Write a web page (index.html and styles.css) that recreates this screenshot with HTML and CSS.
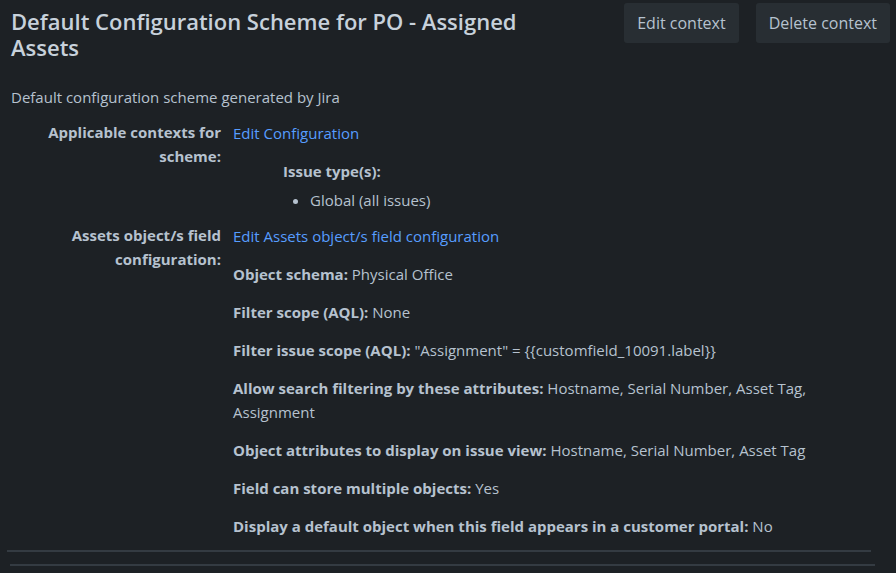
FILE: index.html
```html
<!DOCTYPE html>
<html lang="en">
<head>
  <meta charset="UTF-8">
  <title>Default Configuration Scheme for PO - Assigned Assets</title>
  <link rel="stylesheet" href="styles.css">
</head>
<body>

  <div class="page-header">
    <h1 class="title">Default Configuration Scheme for PO - Assigned Assets</h1>
    <div class="actions">
      <button>Edit context</button>
      <button>Delete context</button>
    </div>
  </div>

  <p class="description">Default configuration scheme generated by Jira</p>

  <div class="field-group">
    <div class="label">Applicable contexts for scheme:</div>
    <div class="value">
      <a href="#">Edit Configuration</a>
      <div class="issue-types">
        <strong>Issue type(s):</strong>
        <ul>
          <li>Global (all issues)</li>
        </ul>
      </div>
    </div>
  </div>

  <div class="field-group">
    <div class="label">Assets object/s field configuration:</div>
    <div class="value">
      <a href="#">Edit Assets object/s field configuration</a>
      <div class="item"><strong>Object schema:</strong> Physical Office</div>
      <div class="item"><strong>Filter scope (AQL):</strong> None</div>
      <div class="item"><strong>Filter issue scope (AQL):</strong> "Assignment" = {{customfield_10091.label}}</div>
      <div class="item"><strong>Allow search filtering by these attributes:</strong> Hostname, Serial Number, Asset Tag, Assignment</div>
      <div class="item"><strong>Object attributes to display on issue view:</strong> Hostname, Serial Number, Asset Tag</div>
      <div class="item"><strong>Field can store multiple objects:</strong> Yes</div>
      <div class="item"><strong>Display a default object when this field appears in a customer portal:</strong> No</div>
    </div>
  </div>

  <hr class="rule">
  <hr class="rule second">

</body>
</html>
```

FILE: styles.css
```css
html, body {
  margin: 0;
  padding: 0;
  background: #1d2125;
  color: #b6c2cf;
  font-family: "Open Sans", "Noto Sans", sans-serif;
  font-size: 15px;
  line-height: 24px;
}

body {
  padding: 0 11px;
}

.page-header {
  display: flex;
  justify-content: space-between;
  align-items: flex-start;
  padding-top: 3px;
}

.title {
  margin: 5px 0 0;
  width: 530px;
  font-size: 22px;
  line-height: 26px;
  font-weight: 600;
  color: #c7d1db;
}

.actions {
  display: flex;
  gap: 17px;
  margin-right: -5px;
}

button {
  height: 40px;
  padding: 0 13px;
  font-family: inherit;
  font-size: 16px;
  color: #b6c2cf;
  background: #282e33;
  border: none;
  border-radius: 3px;
}

.description {
  margin: 25px 0 12px;
}

.field-group {
  display: flex;
  gap: 12px;
  margin-bottom: 12px;
}

.label {
  width: 210px;
  flex-shrink: 0;
  text-align: right;
  font-weight: 700;
  margin-top: -1px;
}

.value {
  flex: 1;
}

a {
  color: #579dff;
  text-decoration: none;
}

.issue-types {
  margin: 14px 0 0 50px;
}

.issue-types strong {
  display: block;
}

.issue-types ul {
  margin: 5px 0 0;
  padding-left: 27px;
}

.item {
  margin-top: 14px;
}

strong {
  font-weight: 700;
}

.rule {
  margin: 1px 14px 0 -4px;
  border: none;
  height: 2px;
  background: #343b42;
}

.rule.second {
  margin: 12px 10px 0 -1px;
}
```
